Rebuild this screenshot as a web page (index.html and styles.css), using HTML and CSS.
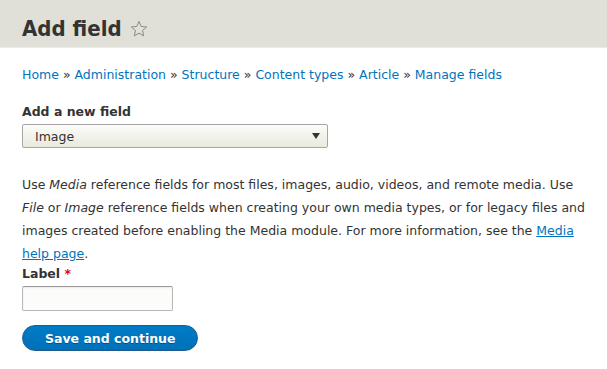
FILE: index.html
```html
<!DOCTYPE html>
<html lang="en">
<head>
    <meta charset="UTF-8">
    <meta name="viewport" content="width=device-width, initial-scale=1.0">
    <title>Add field</title>
    <link rel="stylesheet" href="styles.css">
</head>
<body>
    <header class="page-header">
        <h1 class="page-title">Add field
            <svg class="shortcut-star" width="18" height="18" viewBox="0 0 20 20">
                <path d="M10 1.6l2.45 5.6 6.05.55-4.6 4 1.38 5.95L10 14.6l-5.28 3.1 1.38-5.95-4.6-4 6.05-.55z" fill="none" stroke="#8a8a7a" stroke-width="1.1" stroke-linejoin="round"/>
            </svg>
        </h1>
    </header>

    <main class="content">
        <nav class="breadcrumb">
            <a href="#">Home</a> » <a href="#">Administration</a> » <a href="#">Structure</a> » <a href="#">Content types</a> » <a href="#">Article</a> » <a href="#">Manage fields</a>
        </nav>

        <form class="field-form">
            <div class="form-item">
                <label class="form-label" for="new-field">Add a new field</label>
                <div class="select-wrap">
                    <select id="new-field" class="form-select">
                        <option>Image</option>
                    </select>
                </div>
            </div>

            <p class="description">Use <em>Media</em> reference fields for most files, images, audio, videos, and remote media. Use <em>File</em> or <em>Image</em> reference fields when creating your own media types, or for legacy files and images created before enabling the Media module. For more information, see the <a href="#" class="help-link">Media help page</a>.</p>

            <div class="form-item form-item-label">
                <label class="form-label" for="label">Label <span class="required">*</span></label>
                <input type="text" id="label" class="form-text">
            </div>

            <button type="button" class="button-primary">Save and continue</button>
        </form>
    </main>
</body>
</html>
```

FILE: styles.css
```css
/* reset */
* {
    margin: 0;
    padding: 0;
    box-sizing: border-box;
}

:root {
    --text: #333333;
    --link: #0074bd;
    --header-bg: #e0e0d8;
}

body {
    font-family: 'DejaVu Sans', Verdana, sans-serif;
    font-size: 12.5px;
    color: var(--text);
    background: #ffffff;
}

a {
    color: var(--link);
    text-decoration: none;
}

/* header */
.page-header {
    background: var(--header-bg);
    height: 48px;
    padding: 14px 22px 0;
    border-bottom: 1px solid #ecece6;
}

.page-title {
    font-family: 'DejaVu Sans Condensed', 'DejaVu Sans', sans-serif;
    font-stretch: condensed;
    font-size: 22px;
    font-weight: bold;
    line-height: 30px;
    color: #333;
    display: flex;
    align-items: center;
    gap: 8px;
}

.shortcut-star {
    display: block;
}

/* content */
.content {
    padding: 18px 20px 0 22px;
}

.breadcrumb {
    line-height: 18px;
    margin-bottom: 19px;
}

.form-label {
    display: block;
    font-weight: bold;
    line-height: 18px;
    margin-bottom: 3px;
}

.required {
    color: #e00;
}

.form-select {
    appearance: none;
    width: 306px;
    height: 24px;
    padding: 0 26px 0 12px;
    font-family: inherit;
    font-size: 12.5px;
    color: var(--text);
    border: 1px solid #a6a6a6;
    border-radius: 2px;
    background: linear-gradient(#fcfcfa, #e9e9dd);
}

.select-wrap {
    position: relative;
    width: 306px;
}

.select-wrap::after {
    content: '';
    position: absolute;
    right: 8px;
    top: 9px;
    border-left: 4px solid transparent;
    border-right: 4px solid transparent;
    border-top: 6px solid #333;
}

.description {
    line-height: 23px;
    margin: 25px 0 0;
}

.help-link {
    text-decoration: underline;
}

.form-text {
    display: block;
    width: 151px;
    height: 25px;
    border: 1px solid #b8b8b8;
    border-top-color: #999;
    border-radius: 2px;
    background: #fcfcfa;
    box-shadow: inset 0 1px 2px rgba(0,0,0,0.08);
}

.button-primary {
    margin-top: 14px;
    font-family: inherit;
    font-size: 12.5px;
    font-weight: bold;
    color: #fff;
    height: 26px;
    padding: 0 22px;
    border: 1px solid #1e5c90;
    border-radius: 20px;
    background: linear-gradient(#007bc6, #0071b8);
    text-shadow: 0 1px 0 rgba(0,0,0,0.3);
    cursor: pointer;
}
```
